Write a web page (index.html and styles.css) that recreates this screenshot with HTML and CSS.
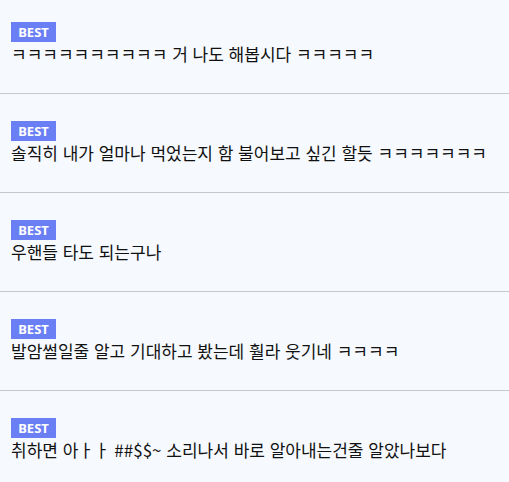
FILE: index.html
```html
<!DOCTYPE html>
<html lang="ko">
<head>
    <meta charset="UTF-8">
    <meta name="viewport" content="width=device-width, initial-scale=1.0">
    <title>Best Comments</title>
    <link rel="stylesheet" href="styles.css">
</head>
<body>
    <ul class="comment-list">
        <li class="comment">
            <span class="badge">BEST</span>
            <p class="comment-text">ㅋㅋㅋㅋㅋㅋㅋㅋㅋㅋ 거 나도 해봅시다 ㅋㅋㅋㅋㅋ</p>
        </li>
        <li class="comment">
            <span class="badge">BEST</span>
            <p class="comment-text">솔직히 내가 얼마나 먹었는지 함 불어보고 싶긴 할듯 ㅋㅋㅋㅋㅋㅋㅋ</p>
        </li>
        <li class="comment">
            <span class="badge">BEST</span>
            <p class="comment-text">우핸들 타도 되는구나</p>
        </li>
        <li class="comment">
            <span class="badge">BEST</span>
            <p class="comment-text">발암썰일줄 알고 기대하고 봤는데 훨라 웃기네 ㅋㅋㅋㅋ</p>
        </li>
        <li class="comment">
            <span class="badge">BEST</span>
            <p class="comment-text">취하면 아ㅏㅏ ##$$~ 소리나서 바로 알아내는건줄 알았나보다</p>
        </li>
    </ul>
</body>
</html>
```

FILE: styles.css
```css
body {
    margin: 0;
    background-color: #f6f9fe;
    font-family: "Noto Sans CJK KR", "Noto Sans", sans-serif;
    color: #111;
}
.comment-list {
    list-style: none;
    margin: 0;
    padding: 0;
}
.comment {
    display: flex;
    flex-direction: column;
    align-items: flex-start;
    padding: 27px 11px 27px;
    border-bottom: 1px solid #c6c8cc;
}
.comment:first-child {
    padding-top: 22px;
}
.comment:last-child {
    border-bottom: none;
}
.badge {
    width: 45px;
    height: 20px;
    line-height: 20px;
    text-align: center;
    background-color: #6b7ff5;
    color: #fff;
    font-family: "Noto Sans", sans-serif;
    font-size: 13px;
    font-weight: bold;
}
.comment-text {
    margin: 0;
    font-size: 17px;
    line-height: 24px;
}
```
